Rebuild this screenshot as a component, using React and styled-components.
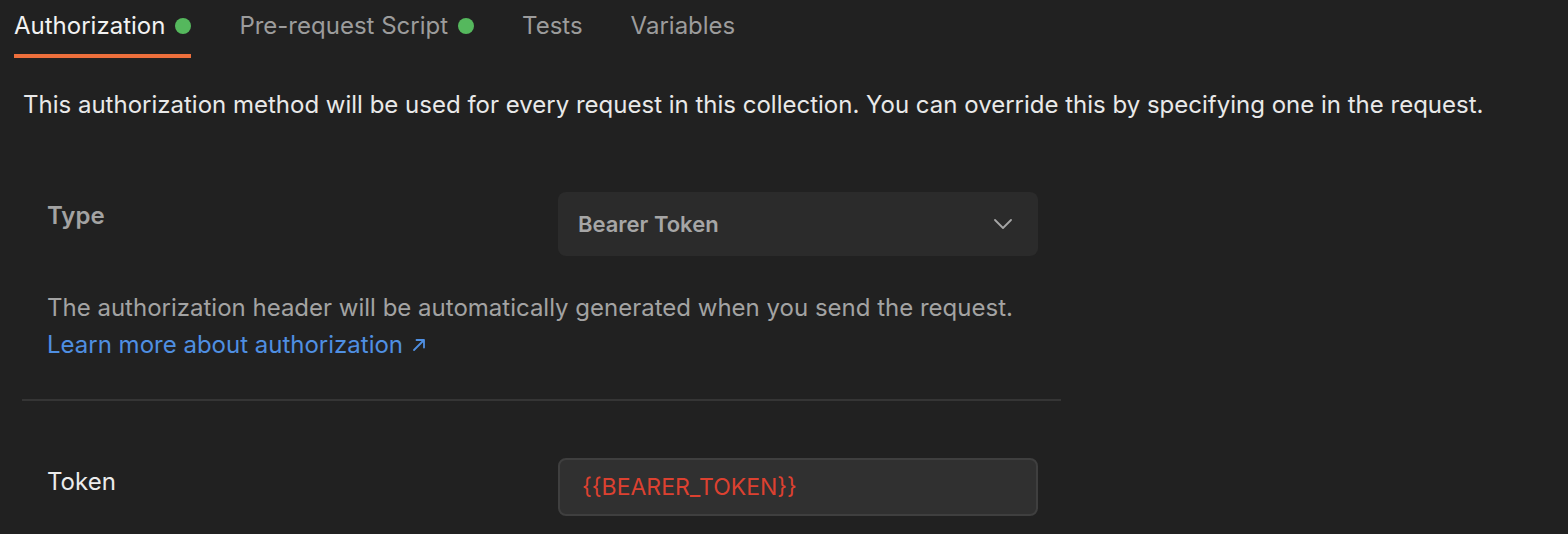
import React from "react";
import styled, { createGlobalStyle } from "styled-components";

const Global = createGlobalStyle`
  html, body { margin: 0; padding: 0; background: #212121; }
  body { font-family: Inter, "Noto Sans", sans-serif; -webkit-font-smoothing: antialiased; }
  * { box-sizing: border-box; }
`;

const Page = styled.div`
  width: 1568px;
  height: 534px;
  background: #212121;
  overflow: hidden;
`;

const TabBar = styled.div`
  display: flex;
  gap: 48px;
  padding-left: 14px;
  height: 58px;
`;

const Tab = styled.div`
  display: flex;
  align-items: flex-start;
  gap: 10px;
  height: 58px;
  padding-top: 10px;
  font-size: 24px;
  line-height: 32px;
  color: ${(p) => (p.$active ? "#f2f2f2" : "#9c9c9c")};
  border-bottom: 4px solid ${(p) => (p.$active ? "#ee6f3c" : "transparent")};
`;

const Dot = styled.span`
  width: 16px;
  height: 16px;
  border-radius: 50%;
  background: #55b85d;
  margin-top: 8px;
`;

const Intro = styled.p`
  margin: 29px 0 0 23px;
  font-size: 24px;
  line-height: 36px;
  color: #e9e9e9;
`;

const Section = styled.div`
  width: 1039px;
  margin: 69px 0 0 22px;
  padding: 0 23px 0 25px;
`;

const Row = styled.div`
  display: grid;
  grid-template-columns: 511px 480px;
  align-items: start;
`;

const Label = styled.div`
  font-size: 24px;
  line-height: 36px;
  font-weight: ${(p) => (p.$bold ? 600 : 400)};
  color: ${(p) => (p.$muted ? "#a3a3a3" : "#ececec")};
  padding-top: ${(p) => p.$top}px;
`;

const Select = styled.div`
  height: 64px;
  border-radius: 8px;
  background: #2b2b2b;
  display: flex;
  align-items: center;
  justify-content: space-between;
  padding: 0 26px 0 20px;
  font-size: 22px;
  font-weight: 600;
  color: #a6a6a6;
`;

const Help = styled.p`
  margin: 33px 0 0;
  font-size: 24px;
  line-height: 37px;
  color: #a3a3a3;
`;

const Link = styled.a`
  display: inline-flex;
  align-items: center;
  gap: 9px;
  font-size: 24px;
  line-height: 37px;
  color: #4f8fe2;
  text-decoration: none;
`;

const Divider = styled.hr`
  margin: 36px 0 0 22px;
  width: 1039px;
  border: none;
  height: 2px;
  background: #353535;
`;

const TokenRow = styled(Row)`
  width: 1039px;
  margin-left: 22px;
  padding: 0 23px 0 25px;
  margin-top: 57px;
`;

const Input = styled.div`
  height: 58px;
  border-radius: 8px;
  background: #303030;
  border: 2px solid #3f3f3f;
  display: flex;
  align-items: center;
  padding-left: 22px;
  font-size: 23px;
  color: #dc4130;
`;

const Chevron = () => (
  <svg width="18" height="10" viewBox="0 0 18 10" fill="none">
    <path d="M1 1l8 8 8-8" stroke="#a6a6a6" strokeWidth="1.8" strokeLinecap="round" strokeLinejoin="round" />
  </svg>
);

const ArrowUpRight = () => (
  <svg width="14" height="14" viewBox="0 0 14 14" fill="none">
    <path d="M2 12L12 2M4.5 2H12v7.5" stroke="#4f8fe2" strokeWidth="1.8" strokeLinecap="round" strokeLinejoin="round" />
  </svg>
);

export default function App() {
  return (
    <Page>
      <Global />
      <TabBar>
        <Tab $active>
          Authorization <Dot />
        </Tab>
        <Tab>
          Pre-request Script <Dot />
        </Tab>
        <Tab>Tests</Tab>
        <Tab>Variables</Tab>
      </TabBar>
      <Intro>
        This authorization method will be used for every request in this collection. You can override this by specifying one in the request.
      </Intro>
      <Section>
        <Row>
          <Label $bold $muted $top={6}>Type</Label>
          <Select>
            Bearer Token
            <Chevron />
          </Select>
        </Row>
        <Help>The authorization header will be automatically generated when you send the request.</Help>
        <Link href="#">
          Learn more about authorization <ArrowUpRight />
        </Link>
      </Section>
      <Divider />
      <TokenRow>
        <Label $top={6}>Token</Label>
        <Input>{"{{BEARER_TOKEN}}"}</Input>
      </TokenRow>
    </Page>
  );
}
